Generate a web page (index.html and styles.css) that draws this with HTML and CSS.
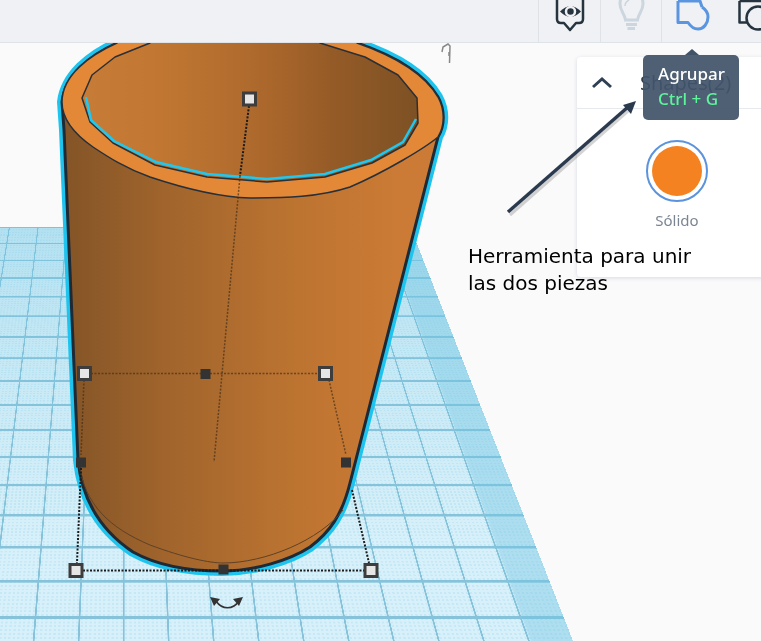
FILE: index.html
```html
<!DOCTYPE html>
<html lang="es">
<head>
<meta charset="utf-8">
<title>Agrupar</title>
<link rel="stylesheet" href="styles.css">
</head>
<body>
<div class="app">
  <div class="grid-plane"></div>

  <svg class="scene" width="761" height="641" viewBox="0 0 761 641">
    <defs>
      <linearGradient id="bodyFill" gradientUnits="userSpaceOnUse" x1="62" y1="0" x2="400" y2="0">
        <stop offset="0" stop-color="#835427"/>
        <stop offset=".3" stop-color="#a0642c"/>
        <stop offset=".7" stop-color="#bd7431"/>
        <stop offset="1" stop-color="#cb7b35"/>
      </linearGradient>
      <linearGradient id="innerFill" gradientUnits="userSpaceOnUse" x1="85" y1="0" x2="418" y2="0">
        <stop offset="0" stop-color="#c67b36"/>
        <stop offset=".2" stop-color="#c27832"/>
        <stop offset=".4" stop-color="#b66f2f"/>
        <stop offset=".58" stop-color="#a8652b"/>
        <stop offset=".74" stop-color="#955b27"/>
        <stop offset="1" stop-color="#7d5124"/>
      </linearGradient>
    </defs>

    <path class="cup-glow" d="M62 102 L64 130 L78 460 C82 500 100 530 133 552 C160 567 195 571 222 571 C255 571 290 560 310 547 C330 532 342 515 350 483 L438 137 C445 125 445 110 438 97 C425 75 400 58 357 43 L357 20 L117 20 L117 43 C90 55 65 75 62 102 Z"/>
    <path class="cup-body" d="M62 102 L64 130 L78 460 C82 500 100 530 133 552 C160 567 195 571 222 571 C255 571 290 560 310 547 C330 532 342 515 350 483 L438 137 C445 125 445 110 438 97 C425 75 400 58 357 43 L357 20 L117 20 L117 43 C90 55 65 75 62 102 Z"/>
    <path class="cup-thin" d="M79 462 C84 505 110 528 150 545 C185 558 210 563 223 563 C265 563 320 540 343 510"/>

    <path class="cup-rim" d="M62 102 C62 75 90 55 117 43 L117 20 L357 20 L357 43 C400 58 425 75 438 97 C445 110 445 125 438 137 C425 148 385 172 350 187 C320 197 285 198 250 198 C215 197 180 187 150 177 C125 168 108 157 93 147 C80 138 62 122 62 102 Z"/>
    <path class="cup-inner" d="M150 43 L115 57 L92 75 L82 98 L90 122 L113 143 L155 165 L207 177 L267 182 L325 177 L372 163 L405 145 L418 123 L417 98 L398 75 L365 57 L320 43 L320 20 L150 20 Z"/>
    <path class="cup-cyan" d="M86 97 L91 120 L114 141 L156 162 L207 174 L267 179 L325 174 L371 160 L403 142 L416 119"/>

    <path class="dots dots-dark" d="M249 106 L240 176"/>
    <path class="dots dots-soft" d="M240 176 L214 462"/>
    <path class="dots dots-soft" d="M91 373.500 H318"/>
    <path class="dots dots-soft" d="M84 380 L81 455"/>
    <path class="dots dots-soft" d="M329 380 L346 455"/>
    <path class="dots dots-dark" d="M81 468 L77 563"/>
    <path class="dots dots-dark" d="M352 490 L369 563"/>
    <path class="dots dots-dark" d="M83 570.500 H364"/>

    <rect class="handle" x="243.500" y="93" width="12" height="12"/>
    <rect class="handle" x="78.500" y="367.500" width="12" height="12"/>
    <rect class="handle" x="319.500" y="367.500" width="12" height="12"/>
    <rect class="handle" x="70" y="564.500" width="12" height="12"/>
    <rect class="handle" x="365" y="564.500" width="12" height="12"/>
    <rect class="knob" x="200.500" y="369" width="10" height="10"/>
    <rect class="knob" x="76" y="457.500" width="10" height="10"/>
    <rect class="knob" x="341" y="457.500" width="10" height="10"/>
    <rect class="knob" x="218.500" y="564.500" width="10" height="10"/>

    <path class="turn-line" d="M216 601 C222 610 233 610 239 601"/>
    <path class="turn-head" d="M210 597 L220 599 L214 606 Z M243 597 L233 599 L239 606 Z"/>
    <path class="hook" d="M442 52 L443 47 L448 44 L450 46 L449.500 63 M449 52 V56"/>
  </svg>

  <header class="toolbar">
    <div class="tool tool-first">
      <svg class="tool-icon" width="61" height="42" viewBox="539 0 61 42">
        <path class="ico-dark" d="M557 -4 V19 Q557 23 561 23 H564 L570 30 L576 23 H579 Q583 23 583 19 V-4"/>
        <path class="ico-eye" d="M560 11.500 Q570.500 1 581 11.500 Q570.500 22 560 11.500 Z"/>
        <circle class="ico-pupil" cx="570.500" cy="11.500" r="4.500"/>
      </svg>
    </div>
    <div class="tool">
      <svg class="tool-icon" width="60" height="42" viewBox="601 0 60 42">
        <path class="ico-bulb" d="M625.500 20 C625 14 620 11 620 4 C620 -5 626 -9 631.500 -9 C637 -9 643 -5 643 4 C643 11 638 14 637.500 20 Z"/>
        <path class="ico-shine" d="M625 6 C625 3 627 1 629 0"/>
        <path class="ico-base" d="M626 24.500 H637 M627.500 28.500 H635"/>
      </svg>
    </div>
    <div class="tool">
      <svg class="tool-icon" width="60" height="42" viewBox="662 0 60 42">
        <path class="ico-blue" d="M678 1 H700 L702 7 M678 1 V22.500 H688 C691 27 695 29 698 29 C704 29 708 23 708 17 C708 12 705 9 702 7"/>
      </svg>
    </div>
    <div class="tool tool-last">
      <svg class="tool-icon" width="39" height="42" viewBox="722 0 39 42">
        <path class="ico-dark" d="M739.500 1 H761 M739.500 1 V22.500 H747"/>
        <circle class="ico-dark" cx="758" cy="18" r="11.500"/>
      </svg>
    </div>
  </header>

  <aside class="panel">
    <div class="panel-head">
      <svg class="chevron" width="22" height="14" viewBox="0 0 22 14">
        <path d="M2 11 L11 3 L20 11"/>
      </svg>
      <span class="panel-title">Shapes(2)</span>
    </div>
    <div class="panel-body">
      <div class="swatch"><div class="swatch-fill"></div></div>
      <div class="swatch-label">Sólido</div>
    </div>
  </aside>

  <svg class="pointer" width="761" height="641" viewBox="0 0 761 641">
    <path class="pointer-shadow" d="M510 215 L628 111"/>
    <path class="pointer-line" d="M508 212 L628 107"/>
    <path class="pointer-head" d="M636 101 L623 105 L631 114 Z"/>
  </svg>

  <div class="tooltip">
    <div class="tooltip-title">Agrupar</div>
    <div class="tooltip-keys">Ctrl + G</div>
  </div>

  <p class="note">Herramienta para unir<br>las dos piezas</p>
</div>
</body>
</html>
```

FILE: styles.css
```css
html, body {
  margin: 0;
  padding: 0;
  background: #fafafb;
}

.app {
  position: relative;
  width: 761px;
  height: 641px;
  overflow: hidden;
  background: #fafafb;
  font-family: "Noto Sans", sans-serif;
}

/* workplane: a flat grid of 16 x 18 cells pushed into perspective */
.grid-plane {
  position: absolute;
  left: 0;
  top: 0;
  width: 1600px;
  height: 1800px;
  transform-origin: 0 0;
  transform: matrix3d(.2866,0,0,0, -.027283,.10891,0,-.00021826, 0,0,1,0, -48.4,226.58,0,1);
  background-color: #c4e8f5;
  background-image:
    linear-gradient(to left, rgba(110,195,225,.4), rgba(110,195,225,.4) 90px, rgba(110,195,225,0) 100px),
    linear-gradient(to bottom, rgba(110,195,225,.35), rgba(110,195,225,0) 1400px),
    linear-gradient(to right, #86c3da 0, #86c3da 4px, rgba(0,0,0,0) 4px),
    linear-gradient(to bottom, #86c3da 0, #86c3da 8px, rgba(0,0,0,0) 8px),
    linear-gradient(to right, #d8f0f9 0, #d8f0f9 5px, rgba(0,0,0,0) 5px),
    linear-gradient(to bottom, #d8f0f9 0, #d8f0f9 5px, rgba(0,0,0,0) 5px);
  background-size: 100% 100%, 100% 100%, 100px 100px, 100px 100px, 10px 10px, 10px 10px;
}

.scene, .pointer {
  position: absolute;
  left: 0;
  top: 0;
}

.cup-glow {
  fill: #1fc4ee;
  stroke: #1fc4ee;
  stroke-width: 10;
  stroke-linejoin: round;
}

.cup-body {
  fill: url(#bodyFill);
  stroke: #1e2a36;
  stroke-width: 3;
  stroke-linejoin: round;
}

.cup-thin {
  fill: none;
  stroke: #5d4127;
  stroke-width: 1;
}

.cup-rim {
  fill: #e38837;
  stroke: #26303a;
  stroke-width: 1.500;
  stroke-linejoin: round;
}

.cup-inner {
  fill: url(#innerFill);
  stroke: #2b2f36;
  stroke-width: 1.500;
  stroke-linejoin: round;
}

.cup-cyan {
  fill: none;
  stroke: #1fc8f0;
  stroke-width: 2.500;
}

.dots {
  fill: none;
  stroke-dasharray: 2 1.500;
}

.dots-dark { stroke: #1b1b1b; stroke-width: 2; }
.dots-soft { stroke: #3e2c18; stroke-width: 1.500; opacity: .65; }

.handle {
  fill: #e6e6e6;
  stroke: #3d3d3d;
  stroke-width: 3;
}

.knob {
  fill: #333;
}

.turn-line {
  fill: none;
  stroke: #333;
  stroke-width: 1.500;
}

.turn-head { fill: #333; }

.hook {
  fill: none;
  stroke: #888;
  stroke-width: 1.500;
}

.toolbar {
  position: absolute;
  left: 0;
  top: 0;
  width: 100%;
  height: 42px;
  display: flex;
  justify-content: flex-end;
  background: #f0f1f4;
  border-bottom: 1px solid #dfe3e8;
}

.tool {
  width: 61px;
  height: 100%;
  display: flex;
  overflow: hidden;
  border-left: 1px solid #dfe3e8;
  box-sizing: border-box;
}

.tool-first { width: 62px; }

.tool-last {
  border-left: none;
  width: 39px;
}

.tool-icon {
  flex: none;
}

.ico-dark {
  fill: none;
  stroke: #26343f;
  stroke-width: 2.500;
  stroke-linejoin: round;
}

.ico-eye { fill: #26343f; }
.ico-pupil { fill: #26343f; stroke: #f0f1f4; stroke-width: 2.500; }

.ico-bulb, .ico-base, .ico-shine {
  fill: none;
  stroke: #ccd6df;
  stroke-width: 3;
}

.ico-shine { stroke-width: 1.500; }

.ico-blue {
  fill: none;
  stroke: #5b95e0;
  stroke-width: 3;
  stroke-linejoin: round;
}

.panel {
  position: absolute;
  left: 577px;
  top: 57px;
  width: 190px;
  height: 220px;
  background: #fff;
  border-radius: 4px;
  box-shadow: 0 1px 4px rgba(60,80,100,.18);
}

.panel-head {
  height: 52px;
  display: flex;
  align-items: center;
  border-bottom: 1px solid #e6e9ee;
  box-sizing: border-box;
}

.chevron {
  margin-left: 14px;
  flex: none;
}

.chevron path {
  fill: none;
  stroke: #2f4054;
  stroke-width: 3;
}

.panel-title {
  margin-left: 27px;
  font-size: 20px;
  color: #2f4054;
}

.panel-body {
  display: flex;
  flex-direction: column;
  align-items: center;
  width: 200px;
  padding-top: 31px;
}

.swatch {
  width: 62px;
  height: 62px;
  box-sizing: border-box;
  border: 2px solid #5b93dc;
  border-radius: 50%;
  display: flex;
  align-items: center;
  justify-content: center;
}

.swatch-fill {
  width: 50px;
  height: 50px;
  border-radius: 50%;
  background: #f58220;
}

.swatch-label {
  margin-top: 8px;
  font-size: 15px;
  color: #7b8592;
}

.pointer-shadow {
  fill: none;
  stroke: rgba(60,60,60,.22);
  stroke-width: 3;
}

.pointer-line {
  fill: none;
  stroke: #2b3a4e;
  stroke-width: 3.500;
}

.pointer-head { fill: #2b3a4e; }

.tooltip {
  position: absolute;
  left: 643px;
  top: 55px;
  width: 96px;
  height: 65px;
  box-sizing: border-box;
  padding: 6px 0 0 15px;
  background: rgba(66,84,106,.93);
  border-radius: 5px;
  font-weight: 500;
  font-size: 17px;
  line-height: 25px;
}

.tooltip::before {
  content: "";
  position: absolute;
  left: 42px;
  top: -6px;
  border-left: 7px solid transparent;
  border-right: 7px solid transparent;
  border-bottom: 6px solid #415368;
}

.tooltip-title { color: #fff; }
.tooltip-keys { color: #5cf59a; }

.note {
  position: absolute;
  left: 468px;
  top: 243px;
  margin: 0;
  font-family: "DejaVu Sans", sans-serif;
  font-size: 20px;
  line-height: 27px;
  color: #000;
}
```
